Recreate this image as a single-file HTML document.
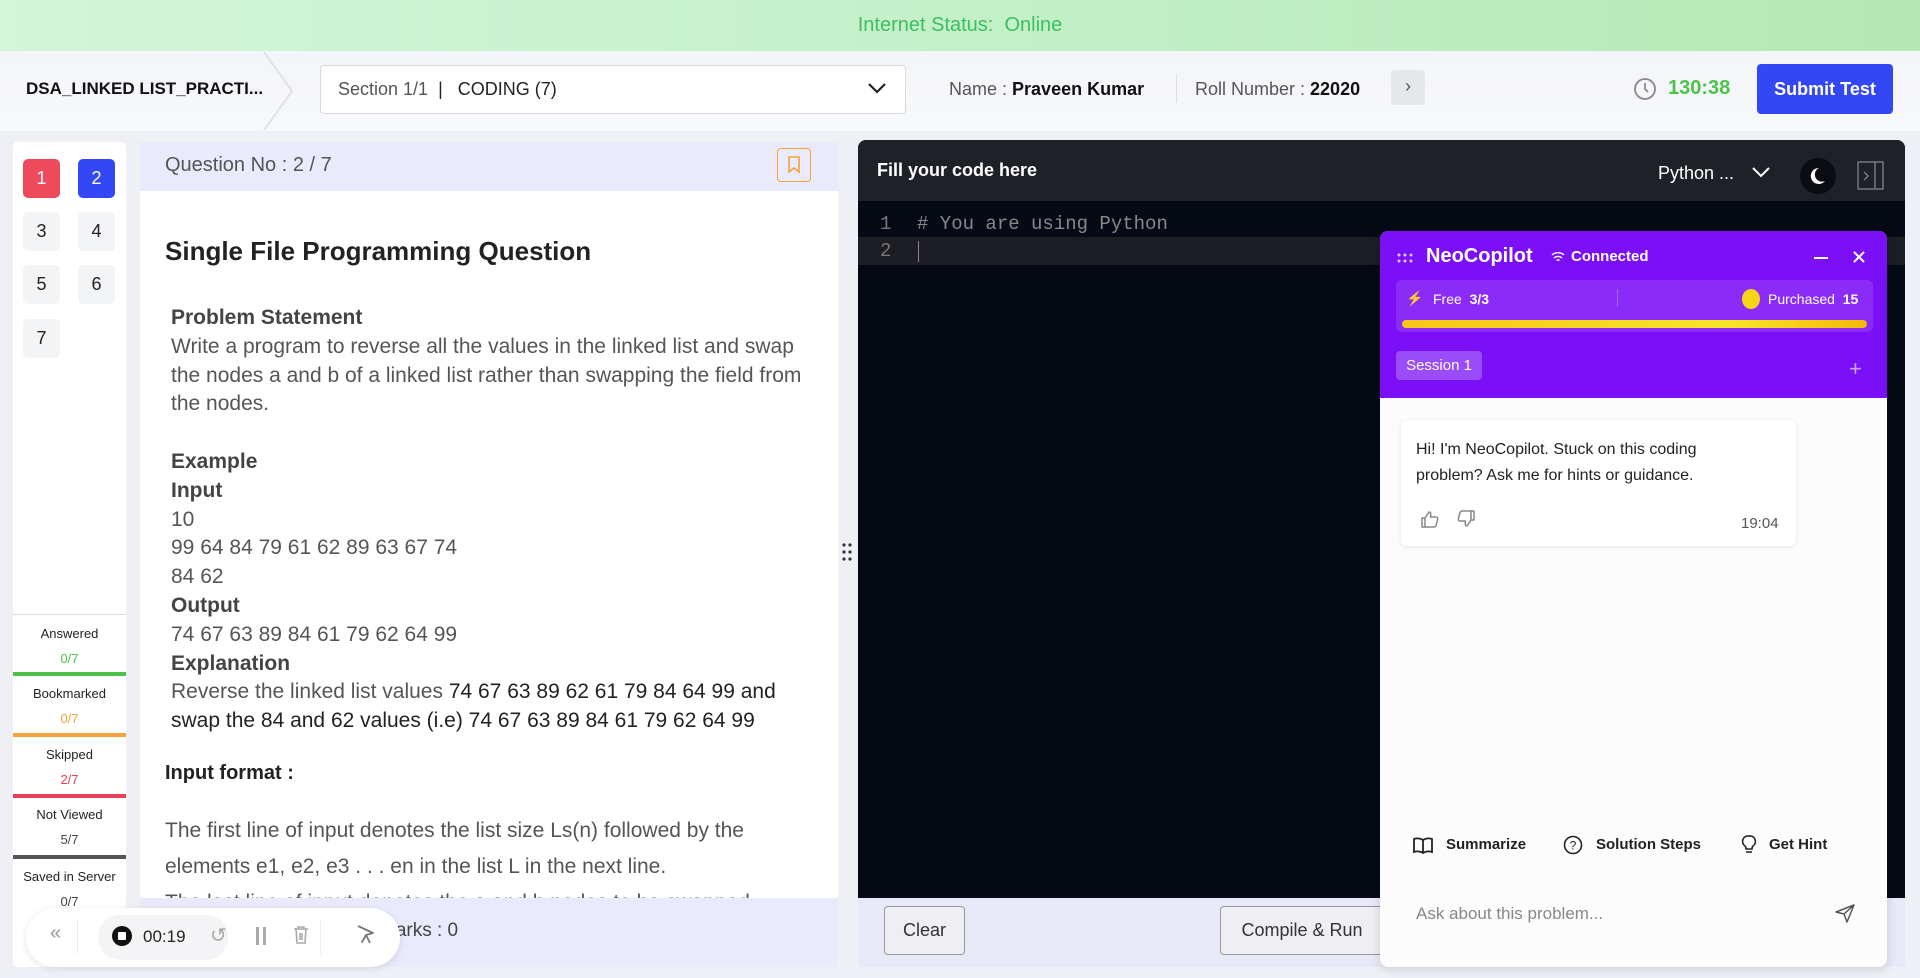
<!DOCTYPE html>
<html><head><meta charset="utf-8"><style>
*{box-sizing:border-box;margin:0;padding:0}
body{width:1920px;height:978px;overflow:hidden;background:#eef0f6;font-family:"Liberation Sans",sans-serif;position:relative;color:#222}
.abs{position:absolute}
.topbar{left:0;top:0;width:1920px;height:51px;background:linear-gradient(90deg,#d3f5d8,#c4f0c8 50%,#b5e8b5);text-align:center;line-height:51px;color:#3cbf62;font-size:20px}
.hdr{left:0;top:51px;width:1920px;height:80px;background:linear-gradient(180deg,#f4f5f8,#f7f8fb)}
.nav{left:13px;top:142px;width:113px;height:825px;background:#fff;border-radius:4px}
.qb{width:37px;height:39px;border-radius:5px;text-align:center;line-height:39px;font-size:18px;background:#f3f4f6;color:#222}
.leg{left:13px;width:113px;text-align:center;font-size:13px;color:#222}
.legn{font-size:13px}
.line{left:13px;width:113px;height:4px}
.qp{left:140px;top:142px;width:698px;height:825px;background:#fff}
.qh{left:140px;top:142px;width:698px;height:49px;background:#e9eafb}
.txt{font-size:21px;color:#555;line-height:28.8px}
.b{color:#444;font-weight:bold}
.ed{left:858px;top:140px;width:1047px;height:758px;background:#050a14;border-radius:8px 8px 0 0}
.edh{left:858px;top:140px;width:1047px;height:61px;background:#1f2128;border-radius:8px 8px 0 0}
.foot{left:858px;top:898px;width:1047px;height:69px;background:#e8e9f8}
.btn{border:1px solid #999;border-radius:4px;background:#eeeef3;font-size:18px;color:#333;text-align:center}
.cp{left:1380px;top:231px;width:507px;height:736px;background:#fcfcfd;border-radius:8px;box-shadow:0 2px 10px rgba(0,0,0,.15);overflow:hidden}
</style></head><body>
<div class="abs topbar">Internet Status:&nbsp; Online</div>
<div class="abs hdr"></div>
<div class="abs" style="left:26px;top:79px;font-size:17px;font-weight:bold;color:#111">DSA_LINKED LIST_PRACTI...</div>
<svg class="abs" style="left:262px;top:52px" width="40" height="78"><path d="M2 0 L30 39 L2 78" fill="none" stroke="#e2e3e8" stroke-width="2"/></svg>
<div class="abs" style="left:320px;top:65px;width:586px;height:49px;background:#fff;border:1px solid #d8d9de;border-radius:4px"></div>
<div class="abs" style="left:338px;top:79px;font-size:18px;color:#555">Section 1/1 <span style="color:#222">&nbsp;|&nbsp;&nbsp; CODING (7)</span></div>
<svg class="abs" style="left:866px;top:80px" width="22" height="16"><path d="M3 4 L11 12 L19 4" fill="none" stroke="#222" stroke-width="2.2"/></svg>
<div class="abs" style="left:949px;top:79px;font-size:18px;color:#555">Name : <b style="color:#111">Praveen Kumar</b></div>
<div class="abs" style="left:1176px;top:75px;width:1px;height:28px;background:#ddd"></div>
<div class="abs" style="left:1195px;top:79px;font-size:18px;color:#555">Roll Number : <b style="color:#111">22020</b></div>
<div class="abs" style="left:1391px;top:70px;width:34px;height:35px;background:#e6e7eb;border-radius:4px;text-align:center;line-height:33px;font-size:18px;color:#555">›</div>
<svg class="abs" style="left:1633px;top:77px" width="24" height="24"><circle cx="12" cy="12" r="10" fill="none" stroke="#888" stroke-width="1.8"/><path d="M12 6 V12 L15 15" fill="none" stroke="#888" stroke-width="1.8"/></svg>
<div class="abs" style="left:1668px;top:77px;font-size:20px;color:#4cc44a;font-weight:bold">130:38</div>
<div class="abs" style="left:1757px;top:64px;width:136px;height:50px;background:#3347f5;border-radius:4px;color:#fff;font-size:18px;font-weight:bold;text-align:center;line-height:50px">Submit Test</div>

<div class="abs nav"></div>
<div class="abs qb" style="left:23px;top:159px;background:#ef4a5c;color:#fff">1</div>
<div class="abs qb" style="left:78px;top:159px;background:#3347f5;color:#fff">2</div>
<div class="abs qb" style="left:23px;top:212px">3</div>
<div class="abs qb" style="left:78px;top:212px">4</div>
<div class="abs qb" style="left:23px;top:265px">5</div>
<div class="abs qb" style="left:78px;top:265px">6</div>
<div class="abs qb" style="left:23px;top:319px">7</div>
<div class="abs" style="left:13px;top:614px;width:113px;height:1px;background:#ddd"></div>
<div class="abs leg" style="top:626px">Answered</div><div class="abs leg legn" style="top:651px;color:#4cc44a">0/7</div>
<div class="abs line" style="top:672px;background:#4cc44a"></div>
<div class="abs leg" style="top:686px">Bookmarked</div><div class="abs leg legn" style="top:711px;color:#f5a33a">0/7</div>
<div class="abs line" style="top:733px;background:#f5a33a"></div>
<div class="abs leg" style="top:747px">Skipped</div><div class="abs leg legn" style="top:772px;color:#e8415a">2/7</div>
<div class="abs line" style="top:794px;background:#e8415a"></div>
<div class="abs leg" style="top:807px">Not Viewed</div><div class="abs leg legn" style="top:832px;color:#444">5/7</div>
<div class="abs line" style="top:855px;background:#555"></div>
<div class="abs leg" style="top:869px">Saved in Server</div><div class="abs leg legn" style="top:894px;color:#444">0/7</div>

<div class="abs qp"></div>
<div class="abs qh"></div>
<div class="abs" style="left:165px;top:154px;font-size:20px;color:#555">Question No : 2 / 7</div>
<div class="abs" style="left:777px;top:148px;width:34px;height:34px;border:1.5px solid #f5a33a;border-radius:4px"></div>
<svg class="abs" style="left:786px;top:156px" width="16" height="18"><path d="M3 1 H13 V16 L8 12 L3 16 Z" fill="none" stroke="#f5a33a" stroke-width="1.6"/></svg>
<div class="abs" style="left:165px;top:236px;font-size:26px;font-weight:bold;color:#222">Single File Programming Question</div>
<div class="abs txt" style="left:171px;top:304px;width:640px">
<div class="b">Problem Statement</div>
<div>Write a program to reverse all the values in the linked list and swap the nodes a and b of a linked list rather than swapping the field from the nodes.</div>
<div>&nbsp;</div>
<div class="b">Example</div>
<div class="b">Input</div>
<div>10</div><div>99 64 84 79 61 62 89 63 67 74</div><div>84 62</div>
<div class="b">Output</div>
<div>74 67 63 89 84 61 79 62 64 99</div>
<div class="b">Explanation</div>
<div>Reverse the linked list values <span style="color:#222">74 67 63 89 62 61 79 84 64 99 and swap the 84 and 62 values (i.e) 74 67 63 89 84 61 79 62 64 99</span></div>
</div>
<div class="abs" style="left:165px;top:762px;font-size:20px;font-weight:bold;color:#222">Input format :</div>
<div class="abs" style="left:165px;top:813px;width:640px;font-size:21px;color:#555;line-height:36px;height:85px;overflow:hidden">The first line of input denotes the list size Ls(n) followed by the elements e1, e2, e3 . . . en in the list L in the next line.<br>The last line of input denotes the a and b nodes to be swapped.</div>
<div class="abs" style="left:140px;top:898px;width:698px;height:69px;background:#e9eafb"></div>
<div class="abs" style="left:380px;top:920px;font-size:19px;color:#444">Marks : 0</div>
<div class="abs" style="left:26px;top:908px;width:374px;height:59px;background:#fff;border-radius:30px;box-shadow:0 2px 8px rgba(0,0,0,.1)"></div>
<div class="abs" style="left:50px;top:922px;font-size:20px;color:#999">«</div>
<div class="abs" style="left:77px;top:920px;width:1px;height:34px;background:#eee"></div>
<div class="abs" style="left:98px;top:915px;width:130px;height:45px;background:#f4f4f6;border-radius:22px"></div>
<div class="abs" style="left:112px;top:926px;width:20px;height:20px;border-radius:50%;background:#111"></div>
<div class="abs" style="left:118px;top:932px;width:8px;height:8px;background:#fff;border-radius:1px"></div>
<div class="abs" style="left:143px;top:927px;font-size:17px;color:#222">00:19</div>
<div class="abs" style="left:210px;top:923px;font-size:20px;color:#aaa">↺</div>
<div class="abs" style="left:256px;top:927px;width:3px;height:18px;background:#aaa"></div>
<div class="abs" style="left:263px;top:927px;width:3px;height:18px;background:#aaa"></div>
<svg class="abs" style="left:293px;top:925px" width="16" height="20"><path d="M1 4 H15 M5 4 V2 H11 V4 M3 4 L4 18 H12 L13 4 M7 8 V15 M9 8 V15" fill="none" stroke="#aaa" stroke-width="1.6"/></svg>
<div class="abs" style="left:320px;top:920px;width:1px;height:34px;background:#eee"></div>
<svg class="abs" style="left:356px;top:924px" width="20" height="22"><path d="M2 2 L17 9 L10 11 L14 19 M10 11 L6 18 Z" fill="none" stroke="#777" stroke-width="1.8" stroke-linejoin="round"/></svg>

<svg class="abs" style="left:841px;top:542px" width="12" height="20"><g fill="#333"><circle cx="3" cy="3" r="1.6"/><circle cx="9" cy="3" r="1.6"/><circle cx="3" cy="10" r="1.6"/><circle cx="9" cy="10" r="1.6"/><circle cx="3" cy="17" r="1.6"/><circle cx="9" cy="17" r="1.6"/></g></svg>

<div class="abs ed"></div>
<div class="abs edh"></div>
<div class="abs" style="left:877px;top:160px;font-size:18px;color:#fff;font-weight:bold">Fill your code here</div>
<div class="abs" style="left:1658px;top:163px;font-size:18px;color:#fff">Python ...</div>
<svg class="abs" style="left:1751px;top:165px" width="20" height="14"><path d="M2 3 L10 11 L18 3" fill="none" stroke="#fff" stroke-width="2"/></svg>
<div class="abs" style="left:1800px;top:158px;width:36px;height:36px;border-radius:50%;background:#0a0c12"></div>
<svg class="abs" style="left:1809px;top:166px" width="18" height="20"><path d="M10 2 A8 8 0 1 0 16 15 A7 7 0 0 1 10 2 Z" fill="#fff"/></svg>
<svg class="abs" style="left:1857px;top:161px" width="28" height="30"><rect x="1" y="1" width="25" height="27" fill="none" stroke="#777" stroke-width="1.5"/><path d="M18 1 V28 M7 11 L11 15 L7 19" fill="none" stroke="#777" stroke-width="1.5"/></svg>
<div class="abs" style="left:858px;top:237px;width:1047px;height:28px;background:#1c1e24"></div>
<div class="abs" style="left:880px;top:211px;font-family:'Liberation Mono',monospace;font-size:19px;color:#777;line-height:27px">1<br>2</div>
<div class="abs" style="left:917px;top:211px;font-family:'Liberation Mono',monospace;font-size:19px;color:#888;line-height:27px"># You are using Python</div>
<div class="abs" style="left:918px;top:241px;width:1px;height:21px;background:#888"></div>
<div class="abs foot"></div>
<div class="abs btn" style="left:884px;top:906px;width:81px;height:49px;line-height:47px">Clear</div>
<div class="abs btn" style="left:1220px;top:906px;width:164px;height:49px;line-height:47px">Compile &amp; Run</div>

<div class="abs cp">
 <div style="position:absolute;left:0;top:0;width:507px;height:167px;background:#7b0ff5"></div>
 <svg style="position:absolute;left:17px;top:22px" width="18" height="10"><g fill="#d8c8ff"><circle cx="2" cy="2" r="1.5"/><circle cx="8" cy="2" r="1.5"/><circle cx="14" cy="2" r="1.5"/><circle cx="2" cy="8" r="1.5"/><circle cx="8" cy="8" r="1.5"/><circle cx="14" cy="8" r="1.5"/></g></svg>
 <div style="position:absolute;left:46px;top:14px;font-size:20px;color:#fff;font-weight:bold">NeoCopilot</div>
 <svg style="position:absolute;left:171px;top:20px" width="14" height="12"><path d="M1 4 A9 9 0 0 1 13 4 M3 7 A6 6 0 0 1 11 7 M5.5 9.5 A2.5 2.5 0 0 1 8.5 9.5" fill="none" stroke="#fff" stroke-width="1.4"/></svg>
 <div style="position:absolute;left:191px;top:17px;font-size:15px;color:#fff;font-weight:bold">Connected</div>
 <div style="position:absolute;left:434px;top:26px;width:14px;height:2px;background:#fff"></div>
 <svg style="position:absolute;left:472px;top:19px" width="14" height="14"><path d="M2 2 L12 12 M12 2 L2 12" stroke="#fff" stroke-width="2"/></svg>
 <div style="position:absolute;left:16px;top:49px;width:477px;height:52px;background:#8a2bf7;border-radius:6px"></div>
 <div style="position:absolute;left:26px;top:59px;font-size:14px;color:#f5c518">⚡</div>
 <div style="position:absolute;left:53px;top:60px;font-size:14px;color:#fff">Free&nbsp; <b>3/3</b></div>
 <div style="position:absolute;left:237px;top:58px;width:1px;height:18px;background:#a066f8"></div>
 <div style="position:absolute;left:362px;top:58px;width:18px;height:20px;border-radius:50%;background:#f5d617"></div>
 <div style="position:absolute;left:388px;top:60px;font-size:14px;color:#fff">Purchased&nbsp; <b>15</b></div>
 <div style="position:absolute;left:22px;top:89px;width:465px;height:8px;border-radius:4px;background:linear-gradient(90deg,#f5c518,#f7e52a 70%,#f5b808)"></div>
 <div style="position:absolute;left:16px;top:120px;width:86px;height:29px;background:#9a4cf8;border-radius:4px;color:#fff;font-size:15px;text-align:center;line-height:29px">Session 1</div>
 <div style="position:absolute;left:469px;top:127px;font-size:22px;color:#c9a6fb;line-height:22px">+</div>
 <div style="position:absolute;left:21px;top:189px;width:395px;height:126px;background:#fff;border-radius:6px;box-shadow:0 1px 5px rgba(0,0,0,.1)"></div>
 <div style="position:absolute;left:36px;top:206px;width:340px;font-size:16px;color:#222;line-height:26px">Hi! I'm NeoCopilot. Stuck on this coding problem? Ask me for hints or guidance.</div>
 <svg style="position:absolute;left:40px;top:279px" width="20" height="18"><path d="M2 8 H5 V17 H2 Z M5 8 L9 2 C11 2 11 4 10.5 7 H16 C17.5 7 18 8.5 17.5 10 L16 15.5 C15.5 16.5 15 17 14 17 H5" fill="none" stroke="#888" stroke-width="1.5" stroke-linejoin="round"/></svg>
 <svg style="position:absolute;left:76px;top:279px" width="20" height="18"><g transform="rotate(180 10 9)"><path d="M2 8 H5 V17 H2 Z M5 8 L9 2 C11 2 11 4 10.5 7 H16 C17.5 7 18 8.5 17.5 10 L16 15.5 C15.5 16.5 15 17 14 17 H5" fill="none" stroke="#888" stroke-width="1.5" stroke-linejoin="round"/></g></svg>
 <div style="position:absolute;left:361px;top:284px;font-size:15px;color:#555">19:04</div>
 <svg style="position:absolute;left:33px;top:605px" width="20" height="18"><path d="M10 4 C7 2 4 2 1 3 V16 C4 15 7 15 10 17 C13 15 16 15 19 16 V3 C16 2 13 2 10 4 Z M10 4 V17" fill="none" stroke="#222" stroke-width="1.8"/></svg>
 <div style="position:absolute;left:66px;top:605px;font-size:15px;color:#222;font-weight:bold">Summarize</div>
 <svg style="position:absolute;left:183px;top:604px" width="20" height="20"><circle cx="10" cy="10" r="8.5" fill="none" stroke="#222" stroke-width="1.6"/><text x="10" y="14.5" font-size="12" text-anchor="middle" font-family="Liberation Sans" fill="#222">?</text></svg>
 <div style="position:absolute;left:216px;top:605px;font-size:15px;color:#222;font-weight:bold">Solution Steps</div>
 <svg style="position:absolute;left:361px;top:603px" width="16" height="22"><path d="M8 2 A5.5 5.5 0 0 0 4 12 C5 13 5 14 5 15 H11 C11 14 11 13 12 12 A5.5 5.5 0 0 0 8 2 Z M5 18 H11" fill="none" stroke="#222" stroke-width="1.6"/></svg>
 <div style="position:absolute;left:389px;top:605px;font-size:15px;color:#222;font-weight:bold">Get Hint</div>
 <div style="position:absolute;left:36px;top:673px;font-size:17px;color:#888">Ask about this problem...</div>
 <svg style="position:absolute;left:454px;top:672px" width="22" height="20"><path d="M2 9 L20 2 L13 19 L10 11 Z M10 11 L20 2" fill="none" stroke="#555" stroke-width="1.5" stroke-linejoin="round"/></svg>
</div>
</body></html>
